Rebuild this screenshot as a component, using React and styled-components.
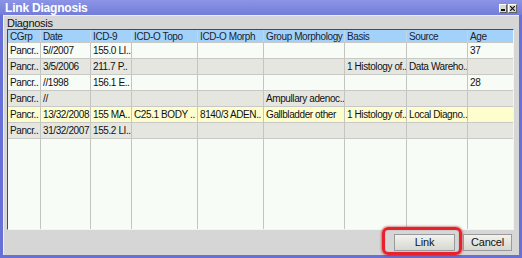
import React from 'react';
import styled, { createGlobalStyle } from 'styled-components';

const Global = createGlobalStyle`
  html, body {
    margin: 0;
    padding: 0;
    background: #ffffff;
  }
  body {
    font-family: "Liberation Sans", Arial, sans-serif;
    font-size: 10px;
    color: #111;
  }
`;

const COLS = '33px 50px 41px 66px 66px 81px 62px 61px 1fr';

const Window = styled.div`
  width: 522px;
  height: 258px;
  box-sizing: border-box;
  background: #6670d6;
  display: flex;
  flex-direction: column;
`;

const TitleBar = styled.div`
  height: 15px;
  flex: none;
  display: flex;
  align-items: center;
  justify-content: space-between;
  padding: 0 5px 0 5px;
  background: linear-gradient(#8b94e6, #737dd9);
`;

const Title = styled.div`
  color: #ffffff;
  font-weight: bold;
  font-size: 12px;
  line-height: 14px;
  letter-spacing: -0.2px;
`;

const Controls = styled.div`
  display: flex;
  gap: 1px;
  margin-top: 1px;
`;

const CtrlBtn = styled.div`
  width: ${p => p.w}px;
  height: 9px;
  box-sizing: border-box;
  background: #d8d8d4;
  border: 1px solid;
  border-color: #ffffff #606060 #606060 #ffffff;
  display: flex;
  align-items: center;
  justify-content: center;
`;

const Body = styled.div`
  flex: 1;
  margin: 0 3px 3px 3px;
  background: #d6d6d6;
  border-top: 1px solid #eeeef8;
  border-left: 1px solid #eeeef8;
  display: flex;
  flex-direction: column;
  padding: 0 5px 0 3px;
  min-height: 0;
`;

const Label = styled.div`
  height: 13px;
  line-height: 14px;
  font-size: 11px;
  letter-spacing: -0.3px;
  flex: none;
`;

const TableFrame = styled.div`
  height: 201px;
  flex: none;
  box-sizing: border-box;
  border: 1px solid;
  border-color: #4a4a4a #f4f4f4 #f4f4f4 #4a4a4a;
  background: #f8fcf6;
  display: flex;
  flex-direction: column;
  overflow: hidden;
`;

const Row = styled.div`
  display: grid;
  grid-template-columns: ${COLS};
  height: ${p => (p.header ? 13 : 16)}px;
  flex: ${p => (p.fill ? 1 : 'none')};
  box-sizing: border-box;
  border-bottom: ${p => (p.fill ? 'none' : '1px solid #c8c8c4')};
  background: ${p => p.bg};
`;

const Cell = styled.div`
  border-right: 1px solid ${p => (p.header ? '#c4d6e4' : '#c4c4c0')};
  padding-left: 2px;
  white-space: nowrap;
  overflow: hidden;
  letter-spacing: -0.4px;
  line-height: ${p => (p.header ? 13 : 16)}px;
  color: ${p => (p.header ? '#1a2430' : '#111')};
  &:last-child {
    border-right: none;
  }
`;

const Footer = styled.div`
  flex: 1;
  display: flex;
  justify-content: flex-end;
  align-items: flex-start;
  padding: 4px 2px 0 0;
  gap: 8px;
`;

const Button = styled.div`
  position: relative;
  width: ${p => p.w}px;
  height: 17px;
  box-sizing: border-box;
  border: 1px solid;
  border-color: #f8f8f8 #707070 #707070 #f8f8f8;
  outline: 1px solid #9a9a9a;
  outline-offset: -1px;
  background: linear-gradient(#f2f2ee, #d8d8d2);
  text-align: center;
  line-height: 15px;
  font-size: 11px;
  letter-spacing: -0.2px;
  color: #111;
`;

const Highlight = styled.div`
  position: absolute;
  left: -13px;
  right: -8px;
  top: -8px;
  bottom: -5px;
  border: 3px solid #e8222c;
  border-radius: 6px;
  box-shadow: 0 0 2px 1px rgba(180, 20, 20, 0.45), inset 0 0 1px rgba(120, 0, 0, 0.6);
  pointer-events: none;
`;

const headers = ['CGrp', 'Date', 'ICD-9', 'ICD-O Topo', 'ICD-O Morph', 'Group Morphology', 'Basis', 'Source', 'Age'];

const rows = [
  ['Pancr..', '5//2007', '155.0 LI..', '', '', '', '', '', '37'],
  ['Pancr..', '3/5/2006', '211.7 P..', '', '', '', '1 Histology of..', 'Data Wareho..', ''],
  ['Pancr..', '//1998', '156.1 E..', '', '', '', '', '', '28'],
  ['Pancr..', '//', '', '', '', 'Ampullary adenoc..', '', '', ''],
  ['Pancr..', '13/32/2008', '155 MA..', 'C25.1 BODY ..', '8140/3 ADEN..', 'Gallbladder other', '1 Histology of..', 'Local Diagno..', ''],
  ['Pancr..', '31/32/2007', '155.2 LI..', '', '', '', '', '', ''],
];

const rowBg = i => (i === 4 ? '#fdfdce' : i % 2 === 0 ? '#f8fcf6' : '#e6e6e0');

export default function App() {
  return (
    <>
      <Global />
      <Window>
        <TitleBar>
          <Title>Link Diagnosis</Title>
          <Controls>
            <CtrlBtn w={8}>
              <svg width="4" height="5" viewBox="0 0 4 5"><rect x="0" y="3" width="4" height="2" fill="#111" /></svg>
            </CtrlBtn>
            <CtrlBtn w={9}>
              <svg width="5" height="5" viewBox="0 0 5 5"><path d="M0 0L5 5M5 0L0 5" stroke="#111" strokeWidth="1.2" /></svg>
            </CtrlBtn>
          </Controls>
        </TitleBar>
        <Body>
          <Label>Diagnosis</Label>
          <TableFrame>
            <Row header bg="#a2d2fa">
              {headers.map(h => <Cell header key={h}>{h}</Cell>)}
            </Row>
            {rows.map((r, i) => (
              <Row key={i} bg={rowBg(i)}>
                {r.map((c, j) => <Cell key={j}>{c}</Cell>)}
              </Row>
            ))}
            <Row fill bg="#f8fcf6">
              {headers.map(h => <Cell key={h} />)}
            </Row>
          </TableFrame>
          <Footer>
            <Button w={61}>
              Link
              <Highlight />
            </Button>
            <Button w={49}>Cancel</Button>
          </Footer>
        </Body>
      </Window>
    </>
  );
}
